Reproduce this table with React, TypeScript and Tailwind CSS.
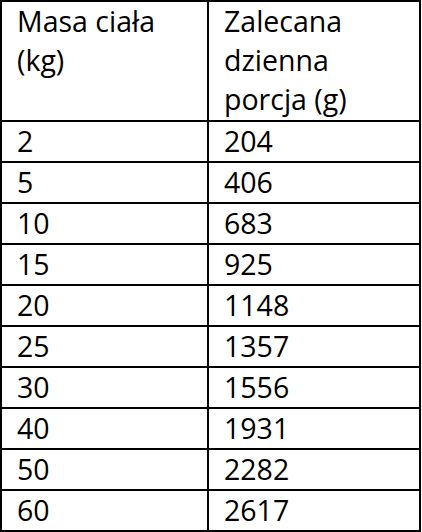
const rows: [string, string][] = [
  ["2", "204"],
  ["5", "406"],
  ["10", "683"],
  ["15", "925"],
  ["20", "1148"],
  ["25", "1357"],
  ["30", "1556"],
  ["40", "1931"],
  ["50", "2282"],
  ["60", "2617"],
];

export default function App() {
  return (
    <div
      className="min-h-[532px] w-[422px] bg-white text-[28.5px] leading-[39px] text-black"
      style={{ fontFamily: '"Open Sans", "Liberation Sans", sans-serif' }}
    >
      <div className="w-[421px] border-2 border-black">
        <div className="flex h-[118px]">
          <div className="w-[207px] border-r-2 border-black pl-[15px]">
            Masa ciała
            <br />
            (kg)
          </div>
          <div className="flex-1 pl-[15px]">
            Zalecana
            <br />
            dzienna
            <br />
            porcja (g)
          </div>
        </div>
        {rows.map(([mass, portion]) => (
          <div key={mass} className="flex h-[41px] border-t-2 border-black">
            <div className="w-[207px] border-r-2 border-black pl-[15px]">{mass}</div>
            <div className="flex-1 pl-[15px]">{portion}</div>
          </div>
        ))}
      </div>
    </div>
  );
}
